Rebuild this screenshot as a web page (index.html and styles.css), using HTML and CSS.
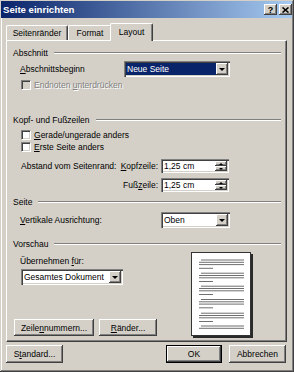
FILE: index.html
```html
<!DOCTYPE html>
<html lang="de">
<head>
  <meta charset="UTF-8" />
  <title>Seite einrichten</title>
  <link rel="stylesheet" href="styles.css">
</head>
<body>
  <div class="window">
    <div class="titlebar">
      <span class="title">Seite einrichten</span>
      <div class="title-buttons">
        <span class="tbtn">?</span>
        <span class="tbtn">
          <svg width="7" height="6" viewBox="0 0 7 6"><path d="M0.5 0.5 L6.5 5.5 M6.5 0.5 L0.5 5.5" stroke="#000" stroke-width="1.6"/></svg>
        </span>
      </div>
    </div>

    <div class="content">
      <div class="tabs">
        <div class="tab tab-margins">Seitenränder</div>
        <div class="tab tab-format">Format</div>
        <div class="tab tab-layout active">Layout</div>
      </div>

      <div class="panel">
        <div class="group-title">Abschnitt</div>
        <div class="row row-begin">
          <span class="label label-begin"><u>A</u>bschnittsbeginn</span>
          <div class="combo combo-begin selected">
            <span class="combo-value">Neue Seite</span>
            <span class="drop"><i class="arrow-down"></i></span>
          </div>
        </div>
        <div class="row row-check row-endnotes">
          <span class="checkbox disabled"></span>
          <span class="disabled-text">Endnoten <u>u</u>nterdrücken</span>
        </div>

        <div class="group-title group-header">Kopf- und Fußzeilen</div>
        <div class="row row-check row-even">
          <span class="checkbox"></span>
          <span><u>G</u>erade/ungerade anders</span>
        </div>
        <div class="row row-check">
          <span class="checkbox"></span>
          <span><u>E</u>rste Seite anders</span>
        </div>
        <div class="row row-spin row-head">
          <div class="spin-label">
            <span class="spin-caption">Abstand vom Seitenrand:</span>
            <span><u>K</u>opfzeile:</span>
          </div>
          <div class="spin">
            <span class="spin-value">1,25 cm</span>
            <span class="spin-buttons">
              <span class="spin-btn"><i class="arrow-up"></i></span>
              <span class="spin-btn"><i class="arrow-down small"></i></span>
            </span>
          </div>
        </div>
        <div class="row row-spin row-foot">
          <div class="spin-label">
            <span class="spin-caption"></span>
            <span>Fuß<u>z</u>eile:</span>
          </div>
          <div class="spin">
            <span class="spin-value">1,25 cm</span>
            <span class="spin-buttons">
              <span class="spin-btn"><i class="arrow-up"></i></span>
              <span class="spin-btn"><i class="arrow-down small"></i></span>
            </span>
          </div>
        </div>

        <div class="group-title group-page">Seite</div>
        <div class="row row-align">
          <span class="label label-align"><u>V</u>ertikale Ausrichtung:</span>
          <div class="combo combo-align">
            <span class="combo-value">Oben</span>
            <span class="drop"><i class="arrow-down"></i></span>
          </div>
        </div>

        <div class="group-title group-preview">Vorschau</div>
        <div class="preview">
          <div class="preview-left">
            <div class="apply-label">Übernehmen <u>f</u>ür:</div>
            <div class="combo combo-apply">
              <span class="combo-value">Gesamtes Dokument</span>
              <span class="drop"><i class="arrow-down"></i></span>
            </div>
            <div class="preview-buttons">
              <span class="btn btn-lines"><span>Zeile<u>n</u>nummern...</span></span>
              <span class="btn btn-borders"><span><u>R</u>änder...</span></span>
            </div>
          </div>
          <div class="sheet">
            <svg width="58" height="82" viewBox="0 0 58 82">
              <g fill="#6f6f6f">
                <rect x="9" y="6.5" width="43" height="1"/>
                <rect x="7" y="8.8" width="45" height="1"/>
                <rect x="7" y="11.1" width="45" height="1"/>
                <rect x="7" y="14.8" width="14" height="1"/>

                <rect x="9" y="19.7" width="43" height="1"/>
                <rect x="7" y="22" width="45" height="1"/>
                <rect x="7" y="24.3" width="45" height="1"/>
                <rect x="7" y="28" width="14" height="1"/>

                <rect x="9" y="32.7" width="43" height="1"/>
                <rect x="7" y="35" width="45" height="1"/>
                <rect x="7" y="37.3" width="45" height="1"/>
                <rect x="7" y="41" width="14" height="1"/>

                <rect x="9" y="46" width="43" height="1"/>
                <rect x="7" y="48.3" width="45" height="1"/>
                <rect x="7" y="50.6" width="45" height="1"/>
                <rect x="7" y="54.3" width="14" height="1"/>

                <rect x="9" y="59.7" width="43" height="1"/>
                <rect x="7" y="62" width="45" height="1"/>
                <rect x="7" y="64.3" width="45" height="1"/>
                <rect x="7" y="68" width="14" height="1"/>

                <rect x="9" y="72.5" width="43" height="1"/>
                <rect x="7" y="74.8" width="45" height="1"/>
              </g>
            </svg>
          </div>
        </div>
      </div>

      <div class="footer">
        <span class="btn btn-standard"><span>S<u>t</u>andard...</span></span>
        <span class="btn btn-ok">OK</span>
        <span class="btn btn-cancel">Abbrechen</span>
      </div>
    </div>
  </div>
</body>
</html>
```

FILE: styles.css
```css
* {
  box-sizing: border-box;
}
body {
  margin: 0;
  font-family: 'Liberation Sans', Arial, sans-serif;
  font-size: 8.5px;
  color: #000;
  background: #d4d0c8;
}
u {
  text-decoration-thickness: 1px;
  text-underline-offset: 1px;
}
.window {
  width: 294px;
  height: 372px;
  background: #d4d0c8;
  padding: 1px 2px 2px 1px;
  box-shadow: inset -1px -1px #404040, inset 1px 1px #d4d0c8, inset -2px -2px #808080, inset 2px 2px #fff;
}
.titlebar {
  height: 17px;
  display: flex;
  align-items: center;
  justify-content: space-between;
  padding: 0 0 0 2px;
  background: linear-gradient(to right, #0a246a, #a6caf0);
}
.title {
  color: #fff;
  font-weight: bold;
  font-size: 9.6px;
}
.title-buttons {
  display: flex;
  gap: 2px;
}
.tbtn {
  width: 13px;
  height: 11px;
  display: flex;
  align-items: center;
  justify-content: center;
  font-weight: bold;
  font-size: 9px;
  background: #d4d0c8;
  box-shadow: inset -1px -1px #404040, inset 1px 1px #fff, inset -2px -2px #808080;
}
.content {
  padding: 5px 5px 0 5px;
}

/* tabs */
.tabs {
  display: flex;
  align-items: flex-end;
  height: 18px;
  margin-bottom: -1px;
  position: relative;
  z-index: 1;
}
.tab {
  height: 15px;
  margin-bottom: 1px;
  display: flex;
  align-items: center;
  justify-content: center;
  border-top: 1px solid #fff;
  border-left: 1px solid #fff;
  border-right: 1px solid #404040;
  border-radius: 2px 2px 0 0;
  box-shadow: inset -1px 0 #808080;
  background: #d4d0c8;
}
.tab-margins {
  width: 62px;
}
.tab-format {
  width: 44px;
}
.tab.active {
  width: 43px;
  height: 18px;
  margin-bottom: 0;
  margin-left: -2px;
  padding-bottom: 2px;
}

/* panel */
.panel {
  height: 302px;
  border: 1px solid;
  border-color: #fff #404040 #404040 #fff;
  box-shadow: inset -1px -1px #808080;
  padding: 6px 5px 0 6px;
  display: flex;
  flex-direction: column;
}
.group-title {
  display: flex;
  align-items: center;
  height: 12px;
}
.group-title::after {
  content: "";
  flex: 1;
  margin-left: 6px;
  border-top: 1px solid #808080;
  border-bottom: 1px solid #fff;
}
.group-header {
  margin-top: 23px;
}
.group-page {
  margin-top: 4px;
}
.group-preview {
  margin-top: 10px;
}
.row {
  display: flex;
  align-items: center;
  padding-left: 7px;
}
.row-begin {
  margin-top: 2px;
  height: 16px;
}
.label-begin {
  width: 104px;
}
.row-check {
  height: 12px;
}
.row-endnotes {
  margin-top: 2px;
}
.row-even {
  margin-top: 3px;
}
.checkbox {
  width: 10px;
  height: 10px;
  margin: 0 3px 0 1px;
  background: #fff;
  border: 1px solid;
  border-color: #808080 #fff #fff #808080;
  box-shadow: inset 1px 1px #404040, inset -1px -1px #d4d0c8;
}
.checkbox.disabled {
  background: #d4d0c8;
}
.disabled-text {
  color: #808080;
  text-shadow: 1px 1px 0 #fff;
}

/* combos and spin boxes */
.combo,
.spin {
  display: flex;
  background: #fff;
  padding: 2px;
  box-shadow: inset 1px 1px #808080, inset 2px 2px #404040, inset -1px -1px #fff, inset -2px -2px #d4d0c8;
}
.combo {
  height: 16px;
}
.combo-value,
.spin-value {
  flex: 1;
  display: flex;
  align-items: center;
  padding-left: 1px;
}
.combo.selected .combo-value {
  background: #0a246a;
  color: #fff;
}
.combo-begin {
  width: 106px;
}
.drop,
.spin-btn {
  display: flex;
  align-items: center;
  justify-content: center;
  background: #d4d0c8;
  box-shadow: inset -1px -1px #404040, inset 1px 1px #fff, inset -2px -2px #808080;
}
.drop {
  width: 12px;
}
.arrow-down {
  width: 0;
  height: 0;
  border-left: 3px solid transparent;
  border-right: 3px solid transparent;
  border-top: 3px solid #000;
}
.arrow-down.small {
  border-left-width: 2px;
  border-right-width: 2px;
  border-top-width: 2px;
}
.arrow-up {
  width: 0;
  height: 0;
  border-left: 2px solid transparent;
  border-right: 2px solid transparent;
  border-bottom: 2px solid #000;
}
.row-spin {
  height: 14px;
}
.row-head {
  margin-top: 6px;
}
.row-foot {
  margin-top: 5px;
}
.spin-label {
  width: 139px;
  display: flex;
  justify-content: space-between;
  padding: 0 1px;
}
.spin {
  width: 68px;
  height: 14px;
  margin-left: 2px;
}
.spin-buttons {
  width: 12px;
  display: flex;
  flex-direction: column;
}
.spin-btn {
  flex: 1;
}
.row-align {
  margin-top: 4px;
  height: 16px;
}
.label-align {
  width: 141px;
}
.combo-align {
  width: 69px;
}

/* preview */
.preview {
  flex: 1;
  display: flex;
}
.preview-left {
  flex: 1;
  display: flex;
  flex-direction: column;
  align-items: flex-start;
  padding: 0 0 5px 1px;
}
.apply-label {
  height: 12px;
  line-height: 12px;
  margin: 5px 0 0 6px;
}
.combo-apply {
  width: 102px;
  margin: 2px 0 0 7px;
}
.preview-buttons {
  margin-top: auto;
  display: flex;
  gap: 5px;
}
.sheet {
  width: 60px;
  height: 84px;
  margin: 2px 30px 0 0;
  background: #fff;
  border: 1px solid #333;
  box-shadow: 2px 2px 0 #2a2a2a;
}
.sheet svg {
  display: block;
}

/* buttons */
.btn {
  display: flex;
  align-items: center;
  justify-content: center;
  background: #d4d0c8;
  box-shadow: inset -1px -1px #404040, inset 1px 1px #fff, inset -2px -2px #808080;
}
.btn-lines {
  width: 80px;
  height: 17px;
}
.btn-borders {
  width: 58px;
  height: 17px;
}
.footer {
  display: flex;
  height: 18px;
  margin-top: 3px;
}
.btn-standard {
  width: 57px;
}
.btn-ok {
  width: 56px;
  margin-left: auto;
  box-shadow: inset 0 0 0 1px #000, inset -2px -2px #404040, inset 2px 2px #fff, inset -3px -3px #808080;
}
.btn-cancel {
  width: 57px;
  margin: 0 1px 0 7px;
}
```
